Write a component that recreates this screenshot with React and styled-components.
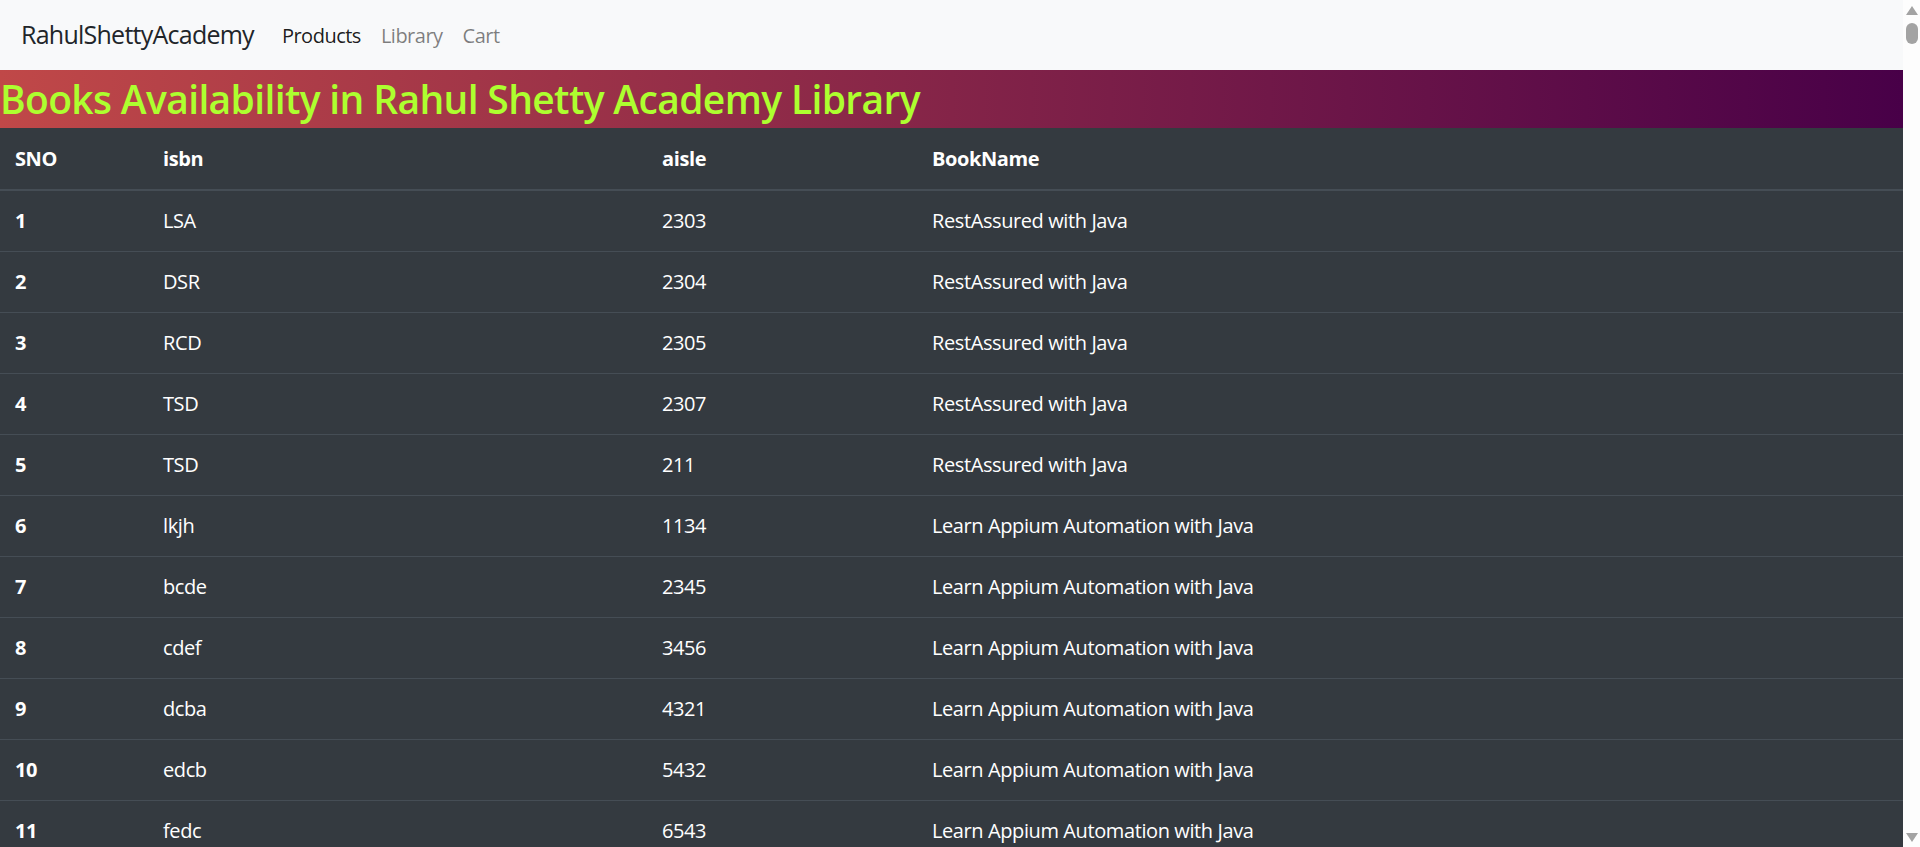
import React from 'react'
import styled, { createGlobalStyle } from 'styled-components'

const books = [
  ['LSA', '2303', 'RestAssured with Java'],
  ['DSR', '2304', 'RestAssured with Java'],
  ['RCD', '2305', 'RestAssured with Java'],
  ['TSD', '2307', 'RestAssured with Java'],
  ['TSD', '211', 'RestAssured with Java'],
  ['lkjh', '1134', 'Learn Appium Automation with Java'],
  ['bcde', '2345', 'Learn Appium Automation with Java'],
  ['cdef', '3456', 'Learn Appium Automation with Java'],
  ['dcba', '4321', 'Learn Appium Automation with Java'],
  ['edcb', '5432', 'Learn Appium Automation with Java'],
  ['fedc', '6543', 'Learn Appium Automation with Java'],
  ['gfed', '7654', 'Learn Appium Automation with Java'],
  ['hgfe', '8765', 'Learn Appium Automation with Java'],
  ['ihgf', '9876', 'Learn Appium Automation with Java'],
]

const links = [
  { name: 'Products', active: true },
  { name: 'Library' },
  { name: 'Cart' },
]

const App = () => {
  return (
    <>
      <GlobalStyle />
      <Page>
        <Navbar>
          <Brand>RahulShettyAcademy</Brand>
          <NavLinks>
            {links.map((l) => (
              <NavLink key={l.name} $active={l.active}>{l.name}</NavLink>
            ))}
          </NavLinks>
        </Navbar>
        <Heading>Books Availability in Rahul Shetty Academy Library</Heading>
        <Table>
          <colgroup>
            <col style={{ width: 148 }} />
            <col style={{ width: 499 }} />
            <col style={{ width: 270 }} />
            <col />
          </colgroup>
          <thead>
            <tr>
              <HeadCell>SNO</HeadCell>
              <HeadCell>isbn</HeadCell>
              <HeadCell>aisle</HeadCell>
              <HeadCell>BookName</HeadCell>
            </tr>
          </thead>
          <tbody>
            {books.map((b, i) => (
              <tr key={i}>
                <RowHead>{i + 1}</RowHead>
                <Td>{b[0]}</Td>
                <Td>{b[1]}</Td>
                <Td>{b[2]}</Td>
              </tr>
            ))}
          </tbody>
        </Table>
      </Page>
      <Scrollbar>
        <Arrow />
        <Thumb />
        <Arrow $down />
      </Scrollbar>
    </>
  )
}

export default App

const GlobalStyle = createGlobalStyle`
  body {
    margin: 0;
    font-family: "Open Sans", "Noto Sans", sans-serif;
    background: #fff;
  }
`
const Page = styled.div`
  margin-right: 17px;
`
const Navbar = styled.nav`
  background-color: #f8f9fa;
  height: 70px;
  display: flex;
  align-items: center;
  padding: 0 20px 0 21px;
`
const Brand = styled.div`
  font-size: 25px;
  color: #212529;
  margin-right: 18px;
  letter-spacing: -0.75px;
  padding-bottom: 2px;
`
const NavLinks = styled.div`
  display: flex;
`
const NavLink = styled.div`
  font-size: 20px;
  padding: 0 10px;
  letter-spacing: -0.5px;
  color: ${(p) => (p.$active ? 'rgba(0,0,0,0.9)' : 'rgba(0,0,0,0.5)')};
`
const Heading = styled.h1`
  margin: 0;
  height: 58px;
  line-height: 58px;
  font-size: 39px;
  font-weight: 600;
  letter-spacing: -0.65px;
  color: #adff2f;
  background: linear-gradient(to right, #c04848, #480048);
  white-space: nowrap;
`
const Table = styled.table`
  width: 100%;
  border-collapse: collapse;
  table-layout: fixed;
  background-color: #343a40;
  color: #fff;
  font-size: 20px;
`
const HeadCell = styled.th`
  text-align: left;
  font-weight: 700;
  padding: 16px 15px 15px;
  line-height: 30px;
  letter-spacing: -0.4px;
  border-bottom: 2px solid #454d55;
`
const RowHead = styled(HeadCell)`
  padding: 15px;
  border-bottom: none;
  border-top: 1px solid #454d55;
`
const Td = styled.td`
  padding: 15px;
  line-height: 30px;
  letter-spacing: -0.4px;
  border-top: 1px solid #454d55;
`
const Scrollbar = styled.div`
  position: fixed;
  top: 0;
  right: 0;
  width: 17px;
  height: 100vh;
  background: #fdfdfd;
  display: flex;
  flex-direction: column;
  align-items: center;
  padding: 6px 0 5px;
  box-sizing: border-box;
`
const Arrow = styled.div`
  width: 0;
  height: 0;
  border-left: 6px solid transparent;
  border-right: 6px solid transparent;
  ${(p) => (p.$down
    ? 'border-top: 9px solid #a3a3a3; margin-top: auto;'
    : 'border-bottom: 9px solid #a3a3a3;')}
`
const Thumb = styled.div`
  width: 12px;
  height: 21px;
  margin-top: 8px;
  border-radius: 6px;
  background: #a3a3a3;
`
